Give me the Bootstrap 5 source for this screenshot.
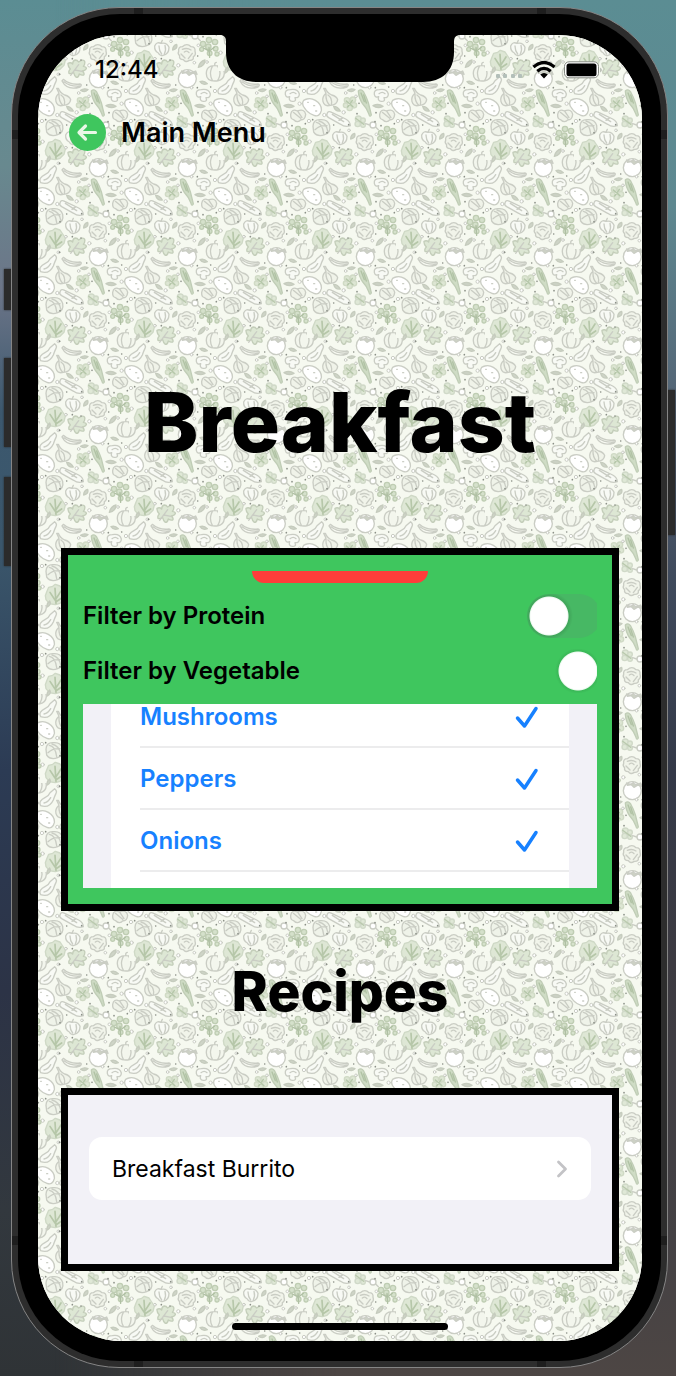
<!DOCTYPE html>
<html lang="en">
<head>
<meta charset="utf-8">
<meta name="viewport" content="width=device-width, initial-scale=1">
<title>Breakfast recipes</title>
<link href="https://cdn.jsdelivr.net/npm/bootstrap@5.3.0/dist/css/bootstrap.min.css" rel="stylesheet">
<style>
  :root { --leaf: #3fc65e; --sky: #1781ff; --panel: #f2f1f7; }
  body {
    font-family: Inter, "Liberation Sans", sans-serif;
    color: #000;
    min-height: 100vh;
    padding: 7px 8px 8px 11px;
    background: linear-gradient(180deg, #5b8d93 0%, #68898f 12%, #6c7588 21%, #3c586e 30%, #3a566b 40%, #2c3b54 56%, #2c3346 72%, #32383e 88%, #2f3336 100%);
  }
  .backdrop-right {
    position: absolute; inset: 0; z-index: -1;
    background: linear-gradient(180deg, #5b8d93 0%, #5e8890 15%, #536274 30%, #3f4a5c 42%, #333847 56%, #3c3a41 70%, #444144 90%, #4d4644 100%);
    -webkit-mask-image: linear-gradient(90deg, transparent 8%, #000 50%);
    mask-image: linear-gradient(90deg, transparent 8%, #000 50%);
  }
  .device {
    border: 1px solid #858585; border-radius: 108px; padding: 6px;
    background:
      linear-gradient(#1e1e1e, #1e1e1e) 122px 0 / 9px 100% no-repeat,
      linear-gradient(#1e1e1e, #1e1e1e) right 121px top 0 / 9px 100% no-repeat,
      linear-gradient(#1e1e1e, #1e1e1e) 0 122px / 100% 9px no-repeat,
      linear-gradient(#1e1e1e, #1e1e1e) 0 calc(100% - 122px) / 100% 9px no-repeat,
      #2d2d2d;
  }
  .side-key { position: absolute; width: 8px; background: #2b2b2b; box-shadow: 0 0 2px #222; z-index: -1; }
  .key-mute { right: 100%; top: 261px; height: 41px; }
  .key-up { right: 100%; top: 350px; height: 89px; }
  .key-down { right: 100%; top: 469px; height: 89px; }
  .key-power { left: 100%; top: 382px; height: 145px; }
  .bezel { background: #000; border-radius: 102px; padding: 21px 19px 20px 20px; }
  .screen { border-radius: 84px; background: #f9fbf3; overflow: hidden; min-height: 1306px; padding: 0 23px 11px; isolation: isolate; }
  .wallpaper { position: absolute; inset: 0; width: 100%; height: 100%; z-index: -1; }
  .notch { position: absolute; top: 0; left: 50%; width: 242px; margin-left: -121px; }
  .status-row { height: 69px; padding: 0 16px 0 34px; font-size: 24px; font-weight: 500; line-height: 28px; }
  .nav-row { height: 57px; padding: 0 8px; }
  .back-link { font-size: 27px; font-weight: 600; line-height: 36px; gap: 15px; color: #000; }
  .meal-title { font-size: 82px; font-weight: 800; line-height: 96px; padding: 214px 0 77px; }
  .boxed { border: 7px solid #000; }
  .filters { background: var(--leaf); padding: 16px 15px; }
  .red-tab { width: 176px; height: 12px; margin-bottom: 5px; background: #ff3d3a; border-radius: 0 0 16px 16px; }
  .filter-row { height: 55px; font-size: 24px; font-weight: 600; line-height: 28px; }
  .switch-clip { width: 70px; height: 44px; overflow: hidden; }
  .form-check-input.filter-switch {
    width: 74px; height: 44px; border: 0; border-radius: 22px; float: none;
    background: radial-gradient(circle at 22px 22px, #fff 18px, rgba(255,255,255,.9) 19px, rgba(0,0,0,.1) 20px, transparent 24px) no-repeat #47b864;
  }
  .form-check-input.filter-switch:checked {
    background: radial-gradient(circle at 51px 22px, #fff 18px, rgba(255,255,255,.9) 19px, rgba(0,0,0,.07) 20px, transparent 23px) no-repeat var(--leaf);
  }
  .veg-scroll { height: 184px; overflow: hidden; padding: 0 28px; background: var(--panel); margin-top: 6px; }
  .veg-list { margin-top: -18px; padding-left: 29px; background: #fff; }
  .veg-item { height: 62px; border: 0; border-bottom: 2px solid #ececed; background: #fff; color: var(--sky); font-size: 24px; font-weight: 600; line-height: 28px; padding: 2px 30px 0 0; }
  .section-title { font-size: 55px; font-weight: 800; line-height: 68px; padding: 46px 0 63px; }
  .recipes { background: var(--panel); padding: 42px 21px 64px; }
  .recipe-link { height: 63px; border-radius: 13px; background: #fff; color: #000; padding: 0 23px; font-size: 23px; line-height: 28px; }
  .home-bar { width: 216px; height: 7px; border-radius: 4px; background: #000; }
</style>
</head>
<body class="position-relative">
<div class="backdrop-right"></div>
<div class="device position-relative">
  <span class="side-key key-mute"></span>
  <span class="side-key key-up"></span>
  <span class="side-key key-down"></span>
  <span class="side-key key-power"></span>
  <div class="bezel">
    <div class="screen position-relative d-flex flex-column">
      <svg class="wallpaper" aria-hidden="true">
        <defs>
          <g id="veg" fill="none" stroke="#cacdc4" stroke-width="4" stroke-linecap="round" stroke-linejoin="round">
            <!-- tomato -->
            <circle cx="175" cy="23" r="27" fill="#fff"/><path d="M158 0q14 8 20-2q4 12 22 2l4 10-12-4-12 7-8-8-12 2z" fill="#cdd2c4"/>
            <!-- pumpkin -->
            <path d="M232 8q0-25 26-24q28 0 28 24q-2 22-28 22q-26 0-26-22zM250-14q-11 22 0 42M266-14q14 22 0 42M258-16q-3-8 4-10" fill="#f3f6ed"/>
            <!-- eggplant -->
            <path d="M2 68q-8-14 14-25q10-4 14-14l14-12q8 6 4 14q-4 8-8 20q-12 26-38 17zM12 60q12-2 20-16" fill="#f8faf5"/>
            <!-- banana -->
            <path d="M70 25q20 18 50 14q8 2 0 9q-38 12-54-18zM72 32q20 16 48 13" fill="#f8faf3"/>
            <!-- garlic -->
            <path d="M50 52l7 15q-13 12-9 25q5 16 22 11q20-1 22-17q-3-10-18-14q-14-6-19-20zM57 70q-1 20 10 32M63 72q14 10 10 30" fill="#f0f3e9"/>
            <!-- herbs -->
            <g fill="#dde6d3" stroke="#d0dac5"><circle cx="120" cy="88" r="8"/><circle cx="138" cy="86" r="8"/><circle cx="141" cy="103" r="8"/><circle cx="128" cy="111" r="8"/><circle cx="116" cy="103" r="7"/></g><path d="M118 90l20 17M136 88l-14 20" stroke="#b5c7a9"/>
            <!-- asparagus -->
            <path d="M154 60q8-8 16 3q8 14 14 32l9 37q-5 8-7-2q-7-19-18-30q-13-18-14-40z" fill="#cfdcc5" stroke="#c0cdb6"/><path d="M162 66l10 26M170 72l8 24" stroke="#b0c2a4"/>
            <!-- potato -->
            <path d="M-10 88q18-10 35 0q20 12 18 31q-5 20-22 14q-18-6-27-20q-12-14-4-25z" fill="#fff"/><path d="M2 94h2M20 104h3M26 120h3"/>
            <!-- mushroom -->
            <path d="M202 70q-2-14 15-14q22-4 27 13q0 12-13 11q5 12-8 11q-12-1-8-14q-10 5-13-7zM216 68q10-8 18 0" fill="#f8faf5"/>
            <!-- turnip -->
            <path d="M218 130q3-18 20-10q22-8 25 10q-2 18-14 16q-10 12-22 0q-10-2-9-16zM226 124l22 18M240 122l12 18" fill="#f0f3e9"/>
            <!-- cucumber -->
            <path d="M60 128q4-10 14-4l42 20q14 8 14 20q-16 6-29-4l-36-20q-8-5-5-12zM76 130l34 22M96 148l12-8" fill="#f8faf5"/>
            <!-- radish -->
            <g fill="#dfe8d6" stroke="#d0d9c8"><circle cx="154" cy="144" r="9"/><circle cx="168" cy="148" r="7"/><circle cx="152" cy="159" r="8"/><circle cx="168" cy="162" r="7"/></g><path d="M146 142l24 18" stroke="#b9c9ad"/><circle cx="198" cy="162" r="9" fill="#fff"/><path d="M176 158l12 4M206 168l8 8"/>
            <!-- cabbage -->
            <path d="M18 166q0-21 22-20q22-2 28 17q4 22-15 28q-22 8-33-8zM28 154q18 2 22 34M36 150q22 6 26 30M24 176q14-14 36-12" fill="#eff3e9"/>
            <!-- bell pepper -->
            <path d="M77 192q6-14 19-8q18-4 24 12q0 22-18 24q-10 3-14-7q-12-6-11-21zM96 184l4-9M90 192q0 14 8 24M108 190q4 14-2 26" fill="#f8faf5"/>
            <!-- broccoli -->
            <g fill="#d5e1cb" stroke="#bfcdb3"><circle cx="240" cy="174" r="8"/><circle cx="258" cy="180" r="8"/><circle cx="222" cy="186" r="8"/><circle cx="238" cy="194" r="8"/><circle cx="260" cy="200" r="7"/><circle cx="218" cy="202" r="6"/><circle cx="264" cy="216" r="6"/><circle cx="242" cy="214" r="7"/></g>
            <path d="M242 226l-2-30M240 208l16-12M238 206l-14-8" stroke="#afc0a3"/>
            <!-- cauliflower -->
            <path d="M149 208q-2-14 11-14q14-12 26 0q14 0 12 14q4 12-5 16q2 12-12 11q-12 8-18-2q-14-1-11-12q-7-6-3-13zM160 202q14-6 26 2M156 216l12 12M190 214l-12 16M166 210q8-6 14 2" fill="#f1f4ea"/>
            <!-- lettuce -->
            <path d="M20 228l6-14 12-3 8-6 14 5 8 12 8 12-4 16-12 12-14 4-18-3-10-12-2-12z" fill="#dee7d5" stroke="#cfd9c6"/><path d="M48 262l-3-45M45 252l-15-23M47 250l16-25M47 258l18-12" stroke="#b6c7a9" stroke-width="5"/>
            <!-- leafy sprig -->
            <path d="M84 244q8-4 14 2q0-10 8-12q6 0 10 6q14-10 18-2q2 8-4 15q10 2 9 7q-4 6-12 7q8 8 4 12q-6 2-13-3q-2 10-9 10q-6-4-8-14q-10 4-14 2q-2-8 4-13q-8-8-7-17z" fill="#dde7d4" stroke="#c4ceba"/><path d="M92 280l24-32M104 264l22 4"/>
            <!-- loose leaves -->
            <g fill="#ced4c7" stroke="#c6ccbe"><path d="M80 106q12 0 20 14q-16 2-20-14zM198 104q16-8 30 2q-16 8-30-2zM122 58q10-8 22-2q-8 10-22 2zM213 32q12-4 22 6q-14 6-22-6zM131 204q0-14 12-17q4 14-12 17zM208 256q4-18 20-22q0 18-20 22zM22 6q-3-10 7-18q6 10-7 18z"/></g>
            <!-- bubbles and seeds -->
            <g stroke-width="3" fill="#fff"><circle cx="52" cy="132" r="5"/><circle cx="110" cy="124" r="5"/><circle cx="188" cy="50" r="4"/><circle cx="116" cy="66" r="4"/><circle cx="258" cy="60" r="5"/><circle cx="245" cy="98" r="5"/><circle cx="6" cy="150" r="5"/><circle cx="126" cy="178" r="4"/><circle cx="208" cy="190" r="4"/><circle cx="8" cy="212" r="5"/><circle cx="78" cy="230" r="4"/><circle cx="148" cy="250" r="5"/><circle cx="234" cy="240" r="4"/><circle cx="196" cy="242" r="4"/><circle cx="147" cy="76" r="4"/><circle cx="55" cy="10" r="4"/></g>
            <g stroke="#8b9087" stroke-width="5"><path d="M205 50h.1M207 125h.1M156 97h.1M125 161h.1M60 185h.1M17 146h.1M204 152h.1M222 164h.1M123 234h.1M97 230h.1M58 277h.1M59 10h.1M262 158h.1M206 222h.1M150 128h.1M80 162h.1M140 42h.1M245 48h.1"/></g>
          </g>
          <pattern id="veg-tile" x="2" y="36" width="89" height="89" patternUnits="userSpaceOnUse" viewBox="0 0 267 267">
            <rect width="267" height="267" fill="#f6f9f0"/>
            <use href="#veg"/><use href="#veg" x="-267"/><use href="#veg" x="267"/><use href="#veg" y="267"/><use href="#veg" y="-267"/>
          </pattern>
        </defs>
        <rect width="100%" height="100%" fill="url(#veg-tile)"/>
      </svg>
      <svg class="notch" viewBox="0 0 242 47" aria-hidden="true"><path d="M1 0C5 0 7 2 7 7V17C7 36 19 47 38 47H204C223 47 235 36 235 17V7C235 2 237 0 241 0Z"/></svg>

      <div class="status-row d-flex align-items-center justify-content-between">
        <span>12:44</span>
        <span class="d-flex align-items-center gap-2">
          <svg width="28" height="18" viewBox="0 0 28 18" fill="#b3bfb9" aria-hidden="true"><rect x="0" y="13" width="4" height="4" rx="1"/><rect x="7" y="13" width="4" height="4" rx="1"/><rect x="15" y="13" width="4" height="4" rx="1"/><rect x="22" y="13" width="4" height="4" rx="1"/></svg>
          <svg width="24" height="18" viewBox="0 0 24 18" aria-hidden="true"><path d="M1.500 6Q12-3 22.500 6M5.300 10.300Q12 4.500 18.700 10.300" fill="none" stroke="#000" stroke-width="3.200"/><path d="M8.200 13.500Q12 10.300 15.800 13.500L12 17.500Z"/></svg>
          <svg width="39" height="18" viewBox="0 0 39 18" aria-hidden="true"><rect x=".5" y=".8" width="34" height="16" rx="4.500" fill="#fff" stroke="#858982"/><rect x="2.500" y="2.500" width="30" height="12.800" rx="2.500"/><path d="M36.500 6.500q2 2.500 0 5z" fill="#858982"/></svg>
        </span>
      </div>

      <nav class="nav-row d-flex align-items-center">
        <a href="#" class="back-link d-flex align-items-center text-decoration-none">
          <svg width="37" height="37" viewBox="0 0 37 37" aria-hidden="true"><circle cx="18.500" cy="18.500" r="18.500" fill="#3fc65e"/><path d="M16.500 12L10 18.500L16.500 25M10.500 18.500H26.500" fill="none" stroke="#e9f7e6" stroke-width="3.200" stroke-linecap="round" stroke-linejoin="round"/></svg>
          Main Menu
        </a>
      </nav>

      <h1 class="meal-title text-center mb-0">Breakfast</h1>

      <section class="filters boxed">
        <div class="red-tab mx-auto"></div>
        <div class="filter-row d-flex align-items-center justify-content-between">
          <label for="protein">Filter by Protein</label>
          <div class="switch-clip"><input class="form-check-input filter-switch m-0" type="checkbox" role="switch" id="protein"></div>
        </div>
        <div class="filter-row d-flex align-items-center justify-content-between">
          <label for="vegetable">Filter by Vegetable</label>
          <div class="switch-clip"><input class="form-check-input filter-switch m-0" type="checkbox" role="switch" id="vegetable" checked></div>
        </div>
        <div class="veg-scroll">
          <div class="veg-list list-group rounded-0">
            <button type="button" class="veg-item d-flex align-items-center justify-content-between">Mushrooms
              <svg width="24" height="24" viewBox="0 0 24 24" aria-hidden="true"><path d="M2.500 13L9.500 21L21 3.500" fill="none" stroke="#1781ff" stroke-width="3.500" stroke-linecap="round" stroke-linejoin="round"/></svg></button>
            <button type="button" class="veg-item d-flex align-items-center justify-content-between">Peppers
              <svg width="24" height="24" viewBox="0 0 24 24" aria-hidden="true"><path d="M2.500 13L9.500 21L21 3.500" fill="none" stroke="#1781ff" stroke-width="3.500" stroke-linecap="round" stroke-linejoin="round"/></svg></button>
            <button type="button" class="veg-item d-flex align-items-center justify-content-between">Onions
              <svg width="24" height="24" viewBox="0 0 24 24" aria-hidden="true"><path d="M2.500 13L9.500 21L21 3.500" fill="none" stroke="#1781ff" stroke-width="3.500" stroke-linecap="round" stroke-linejoin="round"/></svg></button>
            <div class="veg-item"></div>
          </div>
        </div>
      </section>

      <h2 class="section-title text-center mb-0">Recipes</h2>

      <section class="recipes boxed">
        <a href="#" class="recipe-link d-flex align-items-center justify-content-between text-decoration-none">Breakfast Burrito
          <svg width="12" height="20" viewBox="0 0 12 20" aria-hidden="true"><path d="M2.500 3L9.500 10L2.500 17" fill="none" stroke="#c3c3c6" stroke-width="2.800" stroke-linecap="round" stroke-linejoin="round"/></svg>
        </a>
      </section>

      <div class="home-bar mx-auto mt-auto"></div>
    </div>
  </div>
</div>
<script src="https://cdn.jsdelivr.net/npm/bootstrap@5.3.0/dist/js/bootstrap.bundle.min.js"></script>
</body>
</html>
